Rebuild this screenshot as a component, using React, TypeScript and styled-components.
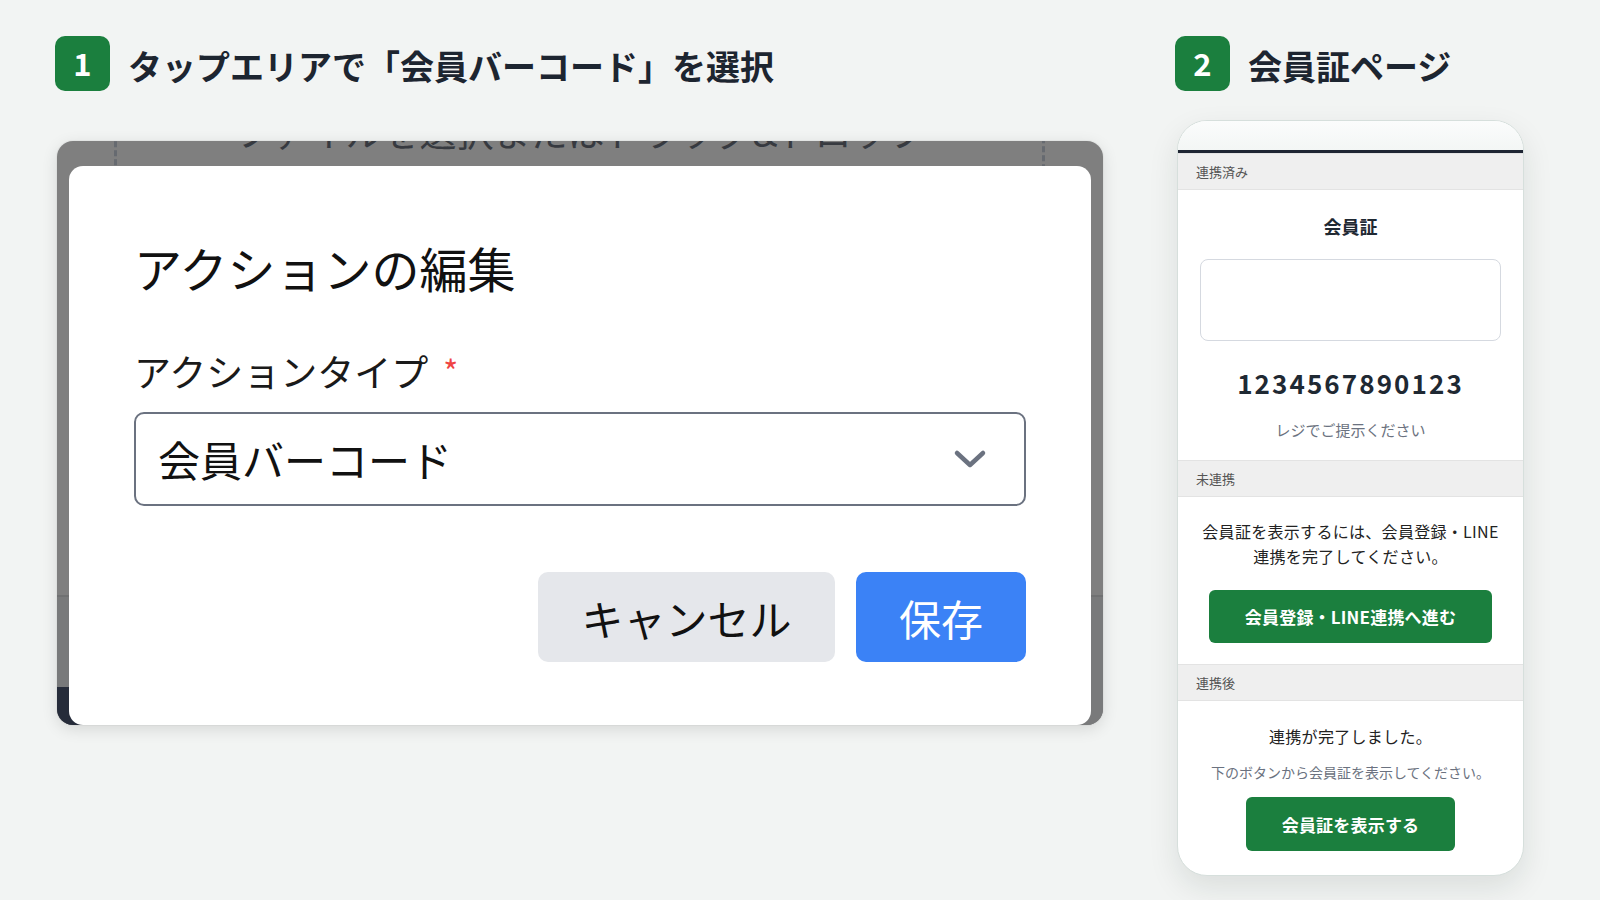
import React from "react";
import styled, { createGlobalStyle } from "styled-components";

const GlobalStyle = createGlobalStyle`
  html, body {
    margin: 0;
    padding: 0;
    background: #f2f4f3;
  }
  body {
    font-family: "Noto Sans CJK JP", "Noto Sans", sans-serif;
    width: 1600px;
    height: 900px;
    overflow: hidden;
  }
  * { box-sizing: border-box; }
`;

const GREEN = "#1b7f3e";

const Page = styled.main`
  display: flex;
  align-items: flex-start;
  padding: 36px 0 0 55px;
  height: 900px;
`;

const Column = styled.section<{ $width: number; $gap: number; $offset?: number }>`
  display: flex;
  flex-direction: column;
  width: ${(p) => p.$width}px;
  gap: ${(p) => p.$gap}px;
  margin-left: ${(p) => p.$offset ?? 0}px;
`;

const StepHeader = styled.header`
  display: flex;
  align-items: center;
  gap: 18px;
  height: 54px;
`;

const StepBadge = styled.span`
  display: flex;
  align-items: center;
  justify-content: center;
  width: 55px;
  height: 55px;
  border-radius: 10px;
  background: ${GREEN};
  color: #fff;
  font-family: "Noto Sans CJK JP", "Noto Sans", sans-serif;
  font-size: 31px;
  font-weight: 700;
  line-height: 1;
  padding-bottom: 2px;
`;

const StepTitle = styled.h2`
  margin: 7px 0 0;
  font-size: 34px;
  font-weight: 700;
  color: #1d2530;
  line-height: 1.2;
  white-space: nowrap;
`;

/* ---------- step 1: captured editor with modal ---------- */

const Shot = styled.div`
  position: relative;
  display: flex;
  flex-direction: column;
  width: 1046px;
  height: 584px;
  margin-left: 2px;
  padding: 25px 12px 0;
  border-radius: 16px;
  overflow: hidden;
  background: #7f7f7f;
  box-shadow: 0 4px 16px rgba(0, 0, 0, 0.12), 0 0 0 1px rgba(0, 0, 0, 0.03);
`;

const DropZone = styled.div`
  position: absolute;
  left: 57px;
  right: 58px;
  top: -80px;
  height: 320px;
  border: 3px dashed #666a70;
  border-radius: 10px;
`;

const DropText = styled.div`
  position: absolute;
  left: 0;
  right: 0;
  top: -28px;
  text-align: center;
  font-size: 37px;
  line-height: 37px;
  color: #373a40;
  white-space: nowrap;
`;

const FooterBand = styled.div`
  position: absolute;
  left: 0;
  right: 0;
  top: 454px;
  bottom: 0;
  background: #797a7b;
  border-top: 2px solid #707172;
`;

const SidebarFoot = styled.div`
  position: absolute;
  left: 0;
  bottom: 0;
  width: 30px;
  height: 38px;
  background: #262c3a;
`;

const Modal = styled.div`
  position: relative;
  flex: 1;
  display: flex;
  flex-direction: column;
  background: #fff;
  border-radius: 14px;
  padding: 74px 65px 0;
`;

const ModalTitle = styled.h3`
  margin: 0 0 53px;
  font-size: 48px;
  line-height: 55px;
  font-weight: 400;
  color: #111;
`;

const FieldLabel = styled.label`
  display: flex;
  align-items: flex-start;
  margin-bottom: 17px;
  font-size: 37px;
  line-height: 47px;
  color: #1a1a1a;
`;

const Required = styled.span`
  margin: 6px 0 0 15px;
  font-size: 32px;
  line-height: 32px;
  color: #ef4444;
`;

const SelectBox = styled.div`
  display: flex;
  align-items: center;
  justify-content: space-between;
  height: 94px;
  padding: 0 37px 0 22px;
  border: 2px solid #6b7280;
  border-radius: 10px;
  margin-bottom: 66px;
`;

const SelectValue = styled.span`
  font-size: 42px;
  line-height: 1;
  color: #111;
`;

const Actions = styled.div`
  display: flex;
  justify-content: flex-end;
  gap: 21px;
`;

const ModalButton = styled.button<{ $primary?: boolean; $width: number }>`
  width: ${(p) => p.$width}px;
  height: 90px;
  border: none;
  border-radius: 10px;
  font-family: "Noto Sans CJK JP", sans-serif;
  font-size: 42px;
  font-weight: 400;
  background: ${(p) => (p.$primary ? "#3b82f6" : "#e5e7eb")};
  color: ${(p) => (p.$primary ? "#fff" : "#111")};
  padding: 0;
`;

/* ---------- step 2: member card page ---------- */

const Phone = styled.div`
  width: 347px;
  margin-left: 2px;
  border: 1px solid #d6dfdc;
  border-radius: 30px;
  overflow: hidden;
  background: #fff;
  box-shadow: 0 12px 30px rgba(20, 40, 30, 0.1);
`;

const PhoneTop = styled.div`
  height: 32px;
  background: linear-gradient(#fbfcfc, #f3f6f5);
  border-bottom: 3px solid #1e2533;
`;

const SectionLabel = styled.div`
  display: flex;
  align-items: center;
  height: 37px;
  padding-left: 18px;
  background: #efefef;
  border-top: 1px solid #e3e3e3;
  border-bottom: 1px solid #e3e3e3;
  font-size: 13px;
  color: #555;
`;

const SectionBody = styled.div<{ $pad: string }>`
  display: flex;
  flex-direction: column;
  align-items: center;
  padding: ${(p) => p.$pad};
  text-align: center;
`;

const CardTitle = styled.div`
  font-size: 18px;
  font-weight: 700;
  line-height: 26px;
  color: #1f2933;
`;

const BarcodeFrame = styled.div`
  align-self: stretch;
  height: 82px;
  margin-top: 20px;
  border: 1px solid #d5d9e0;
  border-radius: 8px;
`;

const MemberNumber = styled.div`
  margin-top: 24px;
  font-size: 26px;
  line-height: 36px;
  font-weight: 700;
  letter-spacing: 2.1px;
  color: #1f2933;
`;

const Hint = styled.div<{ $size: number; $top: number }>`
  margin-top: ${(p) => p.$top}px;
  font-size: ${(p) => p.$size}px;
  line-height: 22px;
  color: #6b7280;
`;

const BodyText = styled.p`
  margin: 0;
  font-size: 16px;
  line-height: 25px;
  letter-spacing: 0.3px;
  color: #222;
`;

const GreenButton = styled.button<{ $width: number; $height: number; $top: number }>`
  width: ${(p) => p.$width}px;
  height: ${(p) => p.$height}px;
  margin-top: ${(p) => p.$top}px;
  border: none;
  border-radius: 6px;
  background: ${GREEN};
  color: #fff;
  font-family: "Noto Sans CJK JP", sans-serif;
  font-size: 17px;
  font-weight: 700;
  letter-spacing: 0.2px;
  padding: 0;
`;

const Chevron = () => (
  <svg width="34" height="22" viewBox="0 0 34 22" fill="none">
    <polyline
      points="4,5 17,17 30,5"
      stroke="#6b7280"
      strokeWidth="4.5"
      strokeLinecap="round"
      strokeLinejoin="round"
    />
  </svg>
);

export default function App() {
  return (
    <>
      <GlobalStyle />
      <Page>
        <Column $width={1048} $gap={51}>
          <StepHeader>
            <StepBadge>1</StepBadge>
            <StepTitle>タップエリアで「会員バーコード」を選択</StepTitle>
          </StepHeader>
          <Shot>
            <FooterBand />
            <SidebarFoot />
            <DropZone />
            <DropText>ファイルを選択またはドラッグ&amp;ドロップ</DropText>
            <Modal>
              <ModalTitle>アクションの編集</ModalTitle>
              <FieldLabel>
                アクションタイプ<Required>*</Required>
              </FieldLabel>
              <SelectBox>
                <SelectValue>会員バーコード</SelectValue>
                <Chevron />
              </SelectBox>
              <Actions>
                <ModalButton $width={297}>キャンセル</ModalButton>
                <ModalButton $width={170} $primary>
                  保存
                </ModalButton>
              </Actions>
            </Modal>
          </Shot>
        </Column>

        <Column $width={352} $gap={30} $offset={72}>
          <StepHeader>
            <StepBadge>2</StepBadge>
            <StepTitle>会員証ページ</StepTitle>
          </StepHeader>
          <Phone>
            <PhoneTop />
            <SectionLabel>連携済み</SectionLabel>
            <SectionBody $pad="23px 22px 19px">
              <CardTitle>会員証</CardTitle>
              <BarcodeFrame />
              <MemberNumber>1234567890123</MemberNumber>
              <Hint $size={15} $top={18}>
                レジでご提示ください
              </Hint>
            </SectionBody>
            <SectionLabel>未連携</SectionLabel>
            <SectionBody $pad="22px 10px 21px">
              <BodyText>
                会員証を表示するには、会員登録・LINE
                <br />
                連携を完了してください。
              </BodyText>
              <GreenButton $width={283} $height={53} $top={21}>
                会員登録・LINE連携へ進む
              </GreenButton>
            </SectionBody>
            <SectionLabel>連携後</SectionLabel>
            <SectionBody $pad="23px 10px 24px">
              <BodyText>連携が完了しました。</BodyText>
              <Hint $size={14} $top={12}>
                下のボタンから会員証を表示してください。
              </Hint>
              <GreenButton $width={209} $height={54} $top={14}>
                会員証を表示する
              </GreenButton>
            </SectionBody>
          </Phone>
        </Column>
      </Page>
    </>
  );
}
